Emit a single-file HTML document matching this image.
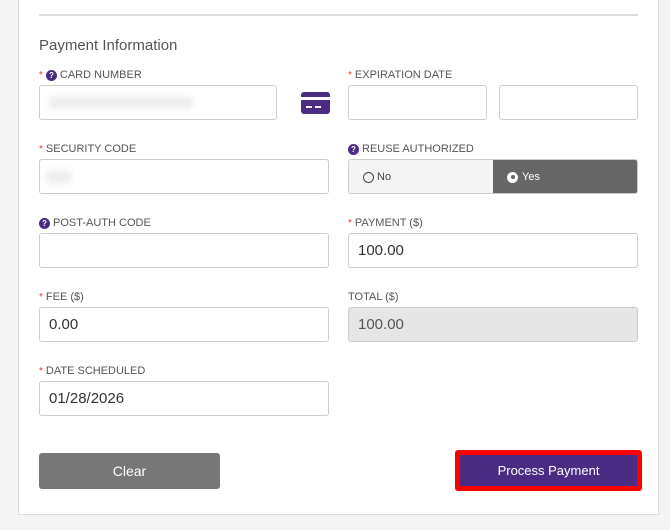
<!DOCTYPE html>
<html><head><style>
*{box-sizing:border-box;margin:0;padding:0}
body{width:670px;height:530px;background:#f4f4f4;font-family:"Liberation Sans",sans-serif;position:relative;overflow:hidden}
.card{position:absolute;left:18px;top:-2px;width:641px;height:517px;background:#fff;border:1px solid #ddd}
.abs{position:absolute}
.line{left:39px;top:14px;width:599px;height:2px;background:#ddd}
.h{left:39px;top:37px;font-size:15px;color:#555}
.lbl{font-size:11px;color:#555;display:flex;align-items:center;height:14px}
.req{color:#e33;margin-right:3px;font-size:10px}
.q{width:11px;height:11px;border-radius:50%;background:#4b2c85;color:#fff;font-size:8px;font-weight:bold;display:inline-flex;align-items:center;justify-content:center;margin-right:3px}
.in{border:1px solid #ccc;border-radius:3px;height:35px;background:#fff;font-size:15px;color:#333;padding-left:9px;display:flex;align-items:center}
.blur{background:#eee;border-radius:4px;filter:blur(3px)}
</style></head><body>
<div class="card"></div>
<div class="abs line"></div>
<div class="abs h">Payment Information</div>

<div class="abs lbl" style="left:39px;top:68px"><span class="req">*</span><span class="q">?</span>CARD NUMBER</div>
<div class="abs in" style="left:39px;top:85px;width:238px"></div>
<div class="abs blur" style="left:49px;top:96px;width:144px;height:13px"></div>
<div class="abs" style="left:301px;top:92px;width:29px;height:22px;background:#4b2c85;border-radius:3px"></div>
<div class="abs" style="left:301px;top:97px;width:29px;height:3px;background:#fff"></div>
<div class="abs" style="left:306px;top:106px;width:6px;height:2px;background:#fff"></div>
<div class="abs" style="left:315px;top:106px;width:6px;height:2px;background:#fff"></div>

<div class="abs lbl" style="left:348px;top:68px"><span class="req">*</span>EXPIRATION DATE</div>
<div class="abs in" style="left:348px;top:85px;width:139px"></div>
<div class="abs in" style="left:499px;top:85px;width:139px"></div>

<div class="abs lbl" style="left:39px;top:142px"><span class="req">*</span>SECURITY CODE</div>
<div class="abs in" style="left:39px;top:159px;width:290px"></div>
<div class="abs blur" style="left:46px;top:170px;width:26px;height:14px"></div>

<div class="abs lbl" style="left:348px;top:142px"><span class="q">?</span>REUSE AUTHORIZED</div>
<div class="abs" style="left:348px;top:159px;width:290px;height:35px;border:1px solid #ccc;border-radius:3px;background:#f4f4f4;overflow:hidden">
<div class="abs" style="left:144px;top:0;width:146px;height:35px;background:#666"></div>
<div class="abs" style="left:14px;top:11px;font-size:11px;color:#444;display:flex;align-items:center"><span style="width:11px;height:11px;border:1.5px solid #444;border-radius:50%;margin-right:3px"></span>No</div>
<div class="abs" style="left:158px;top:11px;font-size:11px;color:#fff;display:flex;align-items:center"><span style="width:11px;height:11px;background:#fff;border-radius:50%;margin-right:4px;display:flex;align-items:center;justify-content:center"><span style="width:4px;height:4px;background:#666;border-radius:50%"></span></span>Yes</div>
</div>

<div class="abs lbl" style="left:39px;top:216px"><span class="q">?</span>POST-AUTH CODE</div>
<div class="abs in" style="left:39px;top:233px;width:290px"></div>
<div class="abs lbl" style="left:348px;top:216px"><span class="req">*</span>PAYMENT ($)</div>
<div class="abs in" style="left:348px;top:233px;width:290px">100.00</div>

<div class="abs lbl" style="left:39px;top:290px"><span class="req">*</span>FEE ($)</div>
<div class="abs in" style="left:39px;top:307px;width:290px">0.00</div>
<div class="abs lbl" style="left:348px;top:290px">TOTAL ($)</div>
<div class="abs in" style="left:348px;top:307px;width:290px;background:#e6e6e6;color:#555">100.00</div>

<div class="abs lbl" style="left:39px;top:364px"><span class="req">*</span>DATE SCHEDULED</div>
<div class="abs in" style="left:39px;top:381px;width:290px">01/28/2026</div>

<div class="abs" style="left:39px;top:453px;width:181px;height:36px;background:#777;border-radius:3px;color:#fff;font-size:14px;display:flex;align-items:center;justify-content:center">Clear</div>
<div class="abs" style="left:455px;top:450px;width:187px;height:41px;background:#f00;border-radius:3px"></div>
<div class="abs" style="left:460px;top:455px;width:177px;height:31px;background:#4b2c85;color:#fff;font-size:13px;display:flex;align-items:center;justify-content:center">Process Payment</div>
</body></html>
